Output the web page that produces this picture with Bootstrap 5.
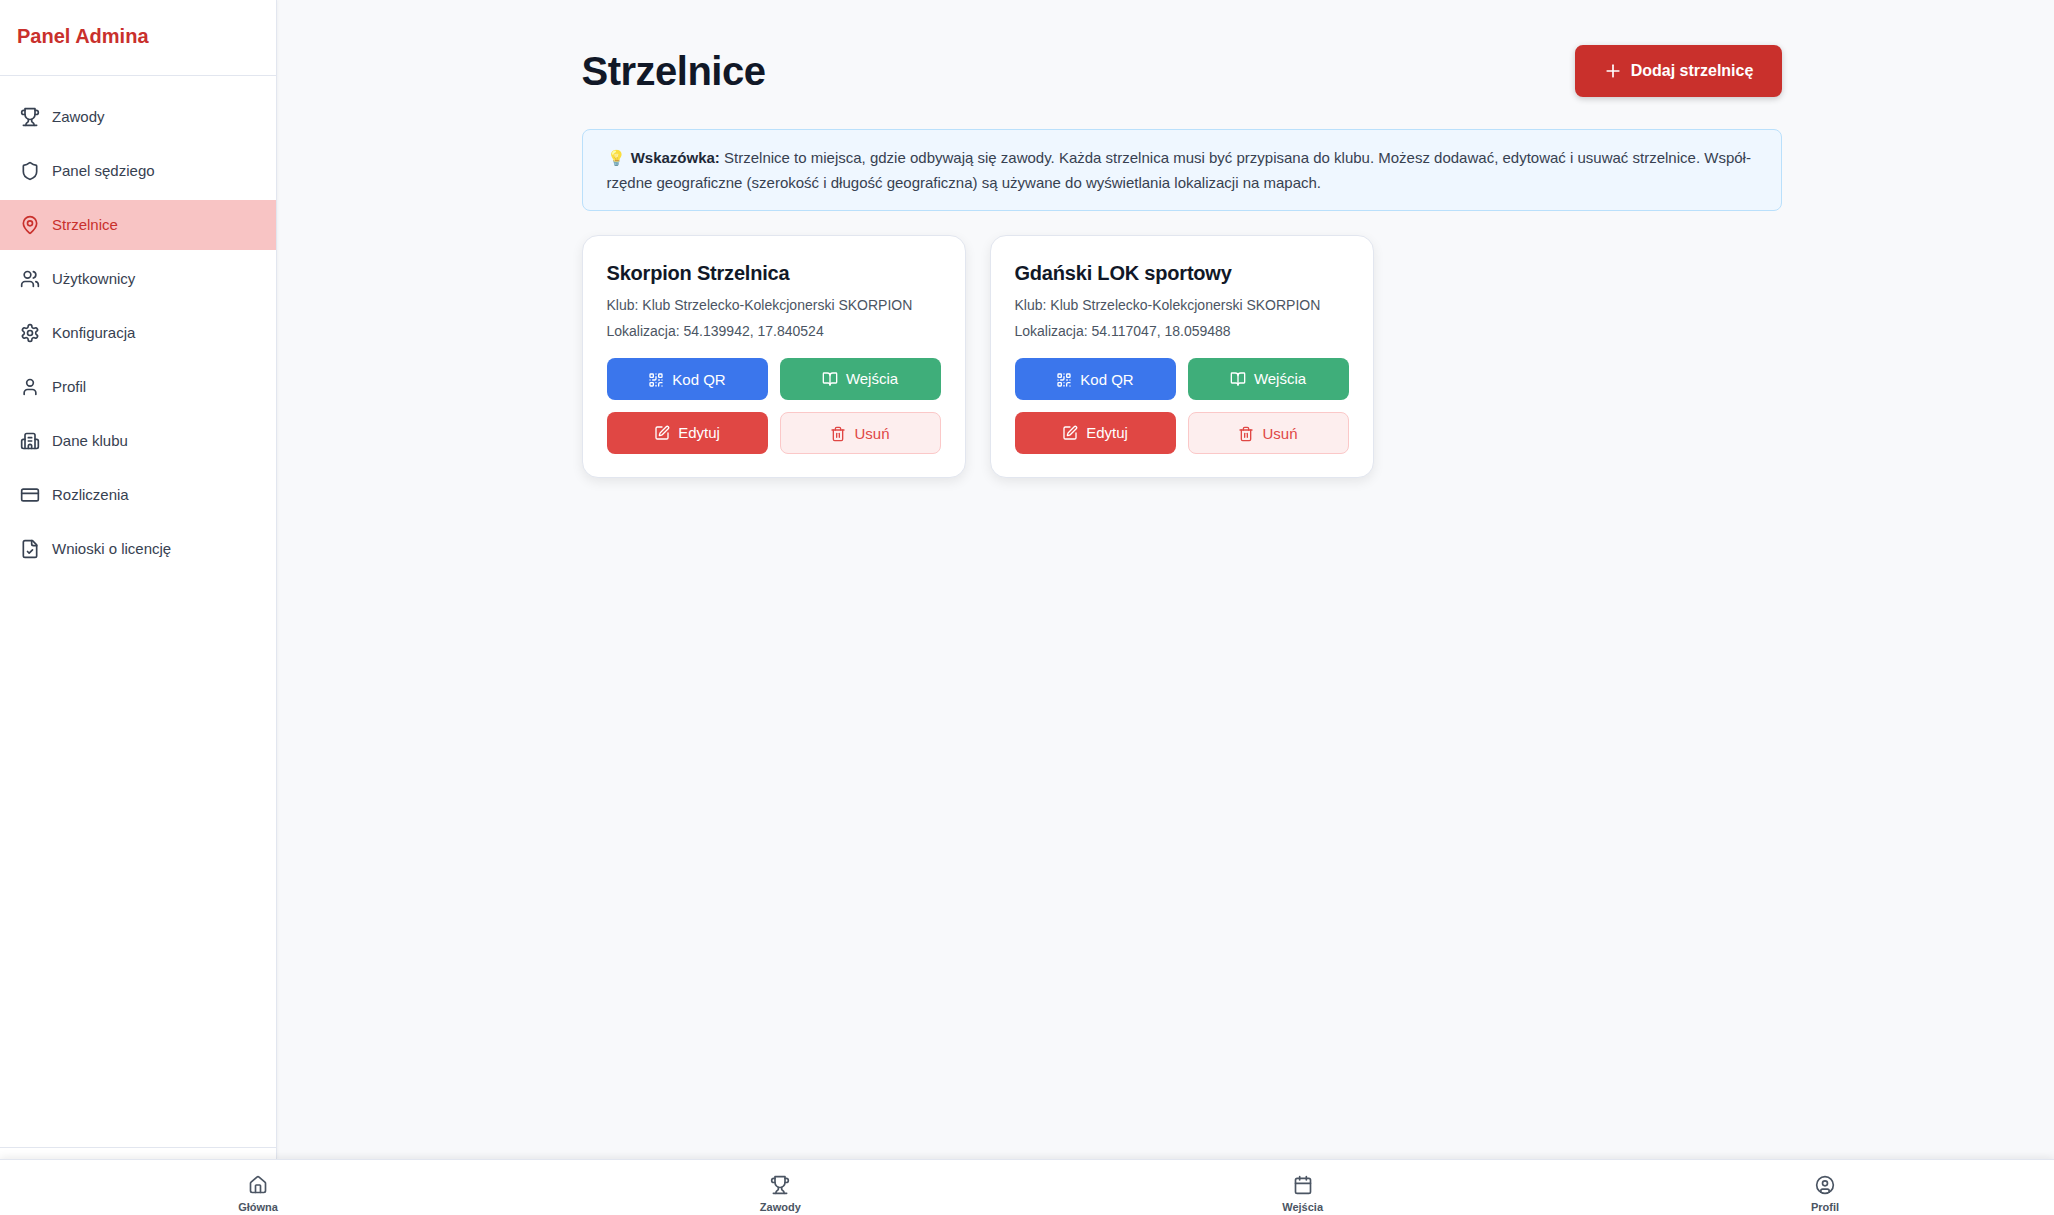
<!DOCTYPE html>
<html lang="pl">
<head>
<meta charset="utf-8">
<title>Strzelnice</title>
<link href="https://cdn.jsdelivr.net/npm/bootstrap@5.3.0/dist/css/bootstrap.min.css" rel="stylesheet">
<style>
html,body{height:100%;}
body{background:#f8f9fb;color:#374151;font-family:"Liberation Sans",Arial,sans-serif;overflow:hidden;}
svg.ico{fill:none;stroke:currentColor;stroke-width:2;stroke-linecap:round;stroke-linejoin:round;flex:none;}
.app-shell{height:1215px;}
.app-top{min-height:0;}
.side{width:277px;background:#fff;border-right:1px solid #e2e6ef;box-shadow:1px 0 3px rgba(0,0,0,.04);}
.side-head{height:76px;padding:0 17px 3px;border-bottom:1px solid #e2e6ef;color:#c9302c;font-size:20px;font-weight:700;}
.side-nav{padding-top:16px;gap:4px;}
.side-link{height:50px;padding:0 20px;gap:12px;color:#374151;font-size:15px;text-decoration:none;}
.side-link.on{background:#f8c4c4;color:#c9302c;}
.side-foot{height:12px;border-top:1px solid #e2e6ef;}
.main-area{padding:45px 0 0 32px;}
.wrap{width:1200px;margin:0 auto;}
.page-title{font-size:40px;font-weight:700;letter-spacing:-.5px;color:#111827;line-height:52px;margin:0;}
.add-btn{height:52px;width:207px;padding:0;gap:8px;background:#c9302c;color:#fff;border:0;border-radius:8px;font-size:16px;font-weight:700;box-shadow:0 2px 6px rgba(0,0,0,.2);}
.hint{margin-top:32px;padding:15px 24px;background:#eff7ff;border:1px solid #bae0fb;border-radius:8px;font-size:15px;line-height:25px;height:82px;color:#374151;}
.hint strong{color:#1f2937;}
.hint-bulb{display:inline-block;margin-right:1px;opacity:.75;}
.site-grid{display:grid;grid-template-columns:repeat(3,384px);gap:24px;margin-top:24px;}
.site-card{background:#fff;border:1px solid #e2e6ef;border-radius:16px;padding:24px;height:243px;box-shadow:0 4px 12px rgba(0,0,0,.08);}
.site-name{font-size:20px;font-weight:700;letter-spacing:-.2px;color:#111827;line-height:26px;margin:0 0 6px;}
.site-meta{font-size:14px;line-height:26px;color:#4b5563;margin:0;}
.act-grid{display:grid;grid-template-columns:1fr 1fr;gap:12px;margin-top:14px;}
.act-btn{height:42px;padding:0;gap:8px;border:0;border-radius:8px;font-size:15px;color:#fff;}
.act-blue{background:#3b76ec;padding-top:2px;}
.act-green{background:#3fae7a;}
.act-red{background:#e04744;}
.act-soft{background:#fdeeee;color:#e04744;border:1px solid #fbc8c8;padding-top:2px;}
.bottom-bar{height:56px;padding:0 199px 0 228px;background:#fff;border-top:1px solid #e2e6ef;box-shadow:0 -2px 8px rgba(0,0,0,.08);position:relative;}
.bot-item{width:60px;gap:4px;color:#4b5563;font-size:11px;font-weight:700;text-decoration:none;padding-top:15px;}
</style>
</head>
<body>
<div class="app-shell d-flex flex-column">
  <div class="app-top d-flex flex-grow-1">
    <aside class="side d-flex flex-column flex-shrink-0">
      <div class="side-head d-flex align-items-center">Panel Admina</div>
      <nav class="side-nav d-flex flex-column flex-grow-1">
        <a class="side-link d-flex align-items-center" href="#"><svg class="ico" width="20" height="20" viewBox="0 0 24 24"><path d="M6 9H4.5a2.5 2.5 0 0 1 0-5H6"/><path d="M18 9h1.5a2.5 2.5 0 0 0 0-5H18"/><path d="M4 22h16"/><path d="M10 14.66V17c0 .55-.47.98-.97 1.21C7.85 18.75 7 20.24 7 22"/><path d="M14 14.66V17c0 .55.47.98.97 1.21C16.15 18.75 17 20.24 17 22"/><path d="M18 2H6v7a6 6 0 0 0 12 0V2Z"/></svg>Zawody</a>
        <a class="side-link d-flex align-items-center" href="#"><svg class="ico" width="20" height="20" viewBox="0 0 24 24"><path d="M20 13c0 5-3.5 7.5-7.66 8.95a1 1 0 0 1-.67-.01C7.5 20.5 4 18 4 13V6a1 1 0 0 1 1-1c2 0 4.5-1.2 6.24-2.72a1.17 1.17 0 0 1 1.52 0C14.51 3.81 17 5 19 5a1 1 0 0 1 1 1z"/></svg>Panel sędziego</a>
        <a class="side-link on d-flex align-items-center" href="#"><svg class="ico" width="20" height="20" viewBox="0 0 24 24"><path d="M20 10c0 4.993-5.539 10.193-7.399 11.799a1 1 0 0 1-1.202 0C9.539 20.193 4 14.993 4 10a8 8 0 0 1 16 0"/><circle cx="12" cy="10" r="3"/></svg>Strzelnice</a>
        <a class="side-link d-flex align-items-center" href="#"><svg class="ico" width="20" height="20" viewBox="0 0 24 24"><path d="M16 21v-2a4 4 0 0 0-4-4H6a4 4 0 0 0-4 4v2"/><circle cx="9" cy="7" r="4"/><path d="M22 21v-2a4 4 0 0 0-3-3.87"/><path d="M16 3.13a4 4 0 0 1 0 7.75"/></svg>Użytkownicy</a>
        <a class="side-link d-flex align-items-center" href="#"><svg class="ico" width="20" height="20" viewBox="0 0 24 24"><path d="M12.22 2h-.44a2 2 0 0 0-2 2v.18a2 2 0 0 1-1 1.73l-.43.25a2 2 0 0 1-2 0l-.15-.08a2 2 0 0 0-2.73.73l-.22.38a2 2 0 0 0 .73 2.73l.15.1a2 2 0 0 1 1 1.72v.51a2 2 0 0 1-1 1.74l-.15.09a2 2 0 0 0-.73 2.73l.22.38a2 2 0 0 0 2.73.73l.15-.08a2 2 0 0 1 2 0l.43.25a2 2 0 0 1 1 1.73V20a2 2 0 0 0 2 2h.44a2 2 0 0 0 2-2v-.18a2 2 0 0 1 1-1.73l.43-.25a2 2 0 0 1 2 0l.15.08a2 2 0 0 0 2.73-.73l.22-.39a2 2 0 0 0-.73-2.73l-.15-.08a2 2 0 0 1-1-1.74v-.5a2 2 0 0 1 1-1.74l.15-.09a2 2 0 0 0 .73-2.73l-.22-.38a2 2 0 0 0-2.73-.73l-.15.08a2 2 0 0 1-2 0l-.43-.25a2 2 0 0 1-1-1.73V4a2 2 0 0 0-2-2z"/><circle cx="12" cy="12" r="3"/></svg>Konfiguracja</a>
        <a class="side-link d-flex align-items-center" href="#"><svg class="ico" width="20" height="20" viewBox="0 0 24 24"><path d="M19 21v-2a4 4 0 0 0-4-4H9a4 4 0 0 0-4 4v2"/><circle cx="12" cy="7" r="4"/></svg>Profil</a>
        <a class="side-link d-flex align-items-center" href="#"><svg class="ico" width="20" height="20" viewBox="0 0 24 24"><path d="M10 12h4"/><path d="M10 8h4"/><path d="M14 21v-3a2 2 0 0 0-4 0v3"/><path d="M6 10H4a2 2 0 0 0-2 2v7a2 2 0 0 0 2 2h16a2 2 0 0 0 2-2v-7a2 2 0 0 0-2-2h-2"/><path d="M6 21V5a2 2 0 0 1 2-2h8a2 2 0 0 1 2 2v16"/></svg>Dane klubu</a>
        <a class="side-link d-flex align-items-center" href="#"><svg class="ico" width="20" height="20" viewBox="0 0 24 24"><rect width="20" height="14" x="2" y="5" rx="2"/><line x1="2" x2="22" y1="10" y2="10"/></svg>Rozliczenia</a>
        <a class="side-link d-flex align-items-center" href="#"><svg class="ico" width="20" height="20" viewBox="0 0 24 24"><path d="M15 2H6a2 2 0 0 0-2 2v16a2 2 0 0 0 2 2h12a2 2 0 0 0 2-2V7Z"/><path d="M14 2v4a2 2 0 0 0 2 2h4"/><path d="m9 15 2 2 4-4"/></svg>Wnioski o licencję</a>
      </nav>
      <div class="side-foot"></div>
    </aside>
    <main class="main-area flex-grow-1">
      <div class="wrap">
        <div class="d-flex justify-content-between align-items-center">
          <h1 class="page-title">Strzelnice</h1>
          <button class="add-btn btn d-flex align-items-center justify-content-center" type="button"><svg class="ico" width="20" height="20" viewBox="0 0 24 24"><path d="M5 12h14"/><path d="M12 5v14"/></svg>Dodaj strzelnicę</button>
        </div>
        <div class="hint"><span class="hint-bulb">💡</span> <strong>Wskazówka:</strong> Strzelnice to miejsca, gdzie odbywają się zawody. Każda strzelnica musi być przypisana do klubu. Możesz dodawać, edytować i usuwać strzelnice. Współ&shy;rzędne geograficzne (szerokość i długość geograficzna) są używane do wyświetlania lokalizacji na mapach.</div>
        <div class="site-grid">
          <div class="site-card">
            <h2 class="site-name">Skorpion Strzelnica</h2>
            <p class="site-meta">Klub: Klub Strzelecko-Kolekcjonerski SKORPION</p>
            <p class="site-meta">Lokalizacja: 54.139942, 17.840524</p>
            <div class="act-grid">
              <button class="act-btn act-blue btn d-flex align-items-center justify-content-center" type="button"><svg class="ico" width="16" height="16" viewBox="0 0 24 24"><rect width="5" height="5" x="3" y="3" rx="1"/><rect width="5" height="5" x="16" y="3" rx="1"/><rect width="5" height="5" x="3" y="16" rx="1"/><path d="M21 16h-3a2 2 0 0 0-2 2v3"/><path d="M21 21v.01"/><path d="M12 7v3a2 2 0 0 1-2 2H7"/><path d="M3 12h.01"/><path d="M12 3h.01"/><path d="M12 16v.01"/><path d="M16 12h1"/><path d="M21 12v.01"/><path d="M12 21v-1"/></svg>Kod QR</button>
              <button class="act-btn act-green btn d-flex align-items-center justify-content-center" type="button"><svg class="ico" width="16" height="16" viewBox="0 0 24 24"><path d="M12 7v14"/><path d="M3 18a1 1 0 0 1-1-1V4a1 1 0 0 1 1-1h5a4 4 0 0 1 4 4 4 4 0 0 1 4-4h5a1 1 0 0 1 1 1v13a1 1 0 0 1-1 1h-6a3 3 0 0 0-3 3 3 3 0 0 0-3-3z"/></svg>Wejścia</button>
              <button class="act-btn act-red btn d-flex align-items-center justify-content-center" type="button"><svg class="ico" width="16" height="16" viewBox="0 0 24 24"><path d="M12 3H5a2 2 0 0 0-2 2v14a2 2 0 0 0 2 2h14a2 2 0 0 0 2-2v-7"/><path d="M18.375 2.625a1 1 0 0 1 3 3l-9.013 9.014a2 2 0 0 1-.853.505l-2.873.84a.5.5 0 0 1-.62-.62l.84-2.873a2 2 0 0 1 .506-.852z"/></svg>Edytuj</button>
              <button class="act-btn act-soft btn d-flex align-items-center justify-content-center" type="button"><svg class="ico" width="16" height="16" viewBox="0 0 24 24"><path d="M3 6h18"/><path d="M19 6v14c0 1-1 2-2 2H7c-1 0-2-1-2-2V6"/><path d="M8 6V4c0-1 1-2 2-2h4c1 0 2 1 2 2v2"/><line x1="10" x2="10" y1="11" y2="17"/><line x1="14" x2="14" y1="11" y2="17"/></svg>Usuń</button>
            </div>
          </div>
          <div class="site-card">
            <h2 class="site-name">Gdański LOK sportowy</h2>
            <p class="site-meta">Klub: Klub Strzelecko-Kolekcjonerski SKORPION</p>
            <p class="site-meta">Lokalizacja: 54.117047, 18.059488</p>
            <div class="act-grid">
              <button class="act-btn act-blue btn d-flex align-items-center justify-content-center" type="button"><svg class="ico" width="16" height="16" viewBox="0 0 24 24"><rect width="5" height="5" x="3" y="3" rx="1"/><rect width="5" height="5" x="16" y="3" rx="1"/><rect width="5" height="5" x="3" y="16" rx="1"/><path d="M21 16h-3a2 2 0 0 0-2 2v3"/><path d="M21 21v.01"/><path d="M12 7v3a2 2 0 0 1-2 2H7"/><path d="M3 12h.01"/><path d="M12 3h.01"/><path d="M12 16v.01"/><path d="M16 12h1"/><path d="M21 12v.01"/><path d="M12 21v-1"/></svg>Kod QR</button>
              <button class="act-btn act-green btn d-flex align-items-center justify-content-center" type="button"><svg class="ico" width="16" height="16" viewBox="0 0 24 24"><path d="M12 7v14"/><path d="M3 18a1 1 0 0 1-1-1V4a1 1 0 0 1 1-1h5a4 4 0 0 1 4 4 4 4 0 0 1 4-4h5a1 1 0 0 1 1 1v13a1 1 0 0 1-1 1h-6a3 3 0 0 0-3 3 3 3 0 0 0-3-3z"/></svg>Wejścia</button>
              <button class="act-btn act-red btn d-flex align-items-center justify-content-center" type="button"><svg class="ico" width="16" height="16" viewBox="0 0 24 24"><path d="M12 3H5a2 2 0 0 0-2 2v14a2 2 0 0 0 2 2h14a2 2 0 0 0 2-2v-7"/><path d="M18.375 2.625a1 1 0 0 1 3 3l-9.013 9.014a2 2 0 0 1-.853.505l-2.873.84a.5.5 0 0 1-.62-.62l.84-2.873a2 2 0 0 1 .506-.852z"/></svg>Edytuj</button>
              <button class="act-btn act-soft btn d-flex align-items-center justify-content-center" type="button"><svg class="ico" width="16" height="16" viewBox="0 0 24 24"><path d="M3 6h18"/><path d="M19 6v14c0 1-1 2-2 2H7c-1 0-2-1-2-2V6"/><path d="M8 6V4c0-1 1-2 2-2h4c1 0 2 1 2 2v2"/><line x1="10" x2="10" y1="11" y2="17"/><line x1="14" x2="14" y1="11" y2="17"/></svg>Usuń</button>
            </div>
          </div>
        </div>
      </div>
    </main>
  </div>
  <nav class="bottom-bar d-flex justify-content-between flex-shrink-0">
    <a class="bot-item d-flex flex-column align-items-center" href="#"><svg class="ico" width="20" height="20" viewBox="0 0 24 24"><path d="M15 21v-8a1 1 0 0 0-1-1h-4a1 1 0 0 0-1 1v8"/><path d="M3 10a2 2 0 0 1 .709-1.528l7-5.999a2 2 0 0 1 2.582 0l7 5.999A2 2 0 0 1 21 10v9a2 2 0 0 1-2 2H5a2 2 0 0 1-2-2z"/></svg>Główna</a>
    <a class="bot-item d-flex flex-column align-items-center" href="#"><svg class="ico" width="20" height="20" viewBox="0 0 24 24"><path d="M6 9H4.5a2.5 2.5 0 0 1 0-5H6"/><path d="M18 9h1.5a2.5 2.5 0 0 0 0-5H18"/><path d="M4 22h16"/><path d="M10 14.66V17c0 .55-.47.98-.97 1.21C7.85 18.75 7 20.24 7 22"/><path d="M14 14.66V17c0 .55.47.98.97 1.21C16.15 18.75 17 20.24 17 22"/><path d="M18 2H6v7a6 6 0 0 0 12 0V2Z"/></svg>Zawody</a>
    <a class="bot-item d-flex flex-column align-items-center" href="#"><svg class="ico" width="20" height="20" viewBox="0 0 24 24"><path d="M8 2v4"/><path d="M16 2v4"/><rect width="18" height="18" x="3" y="4" rx="2"/><path d="M3 10h18"/></svg>Wejścia</a>
    <a class="bot-item d-flex flex-column align-items-center" href="#"><svg class="ico" width="20" height="20" viewBox="0 0 24 24"><circle cx="12" cy="12" r="10"/><circle cx="12" cy="10" r="3"/><path d="M7 20.662V19a2 2 0 0 1 2-2h6a2 2 0 0 1 2 2v1.662"/></svg>Profil</a>
  </nav>
</div>
</body>
</html>
